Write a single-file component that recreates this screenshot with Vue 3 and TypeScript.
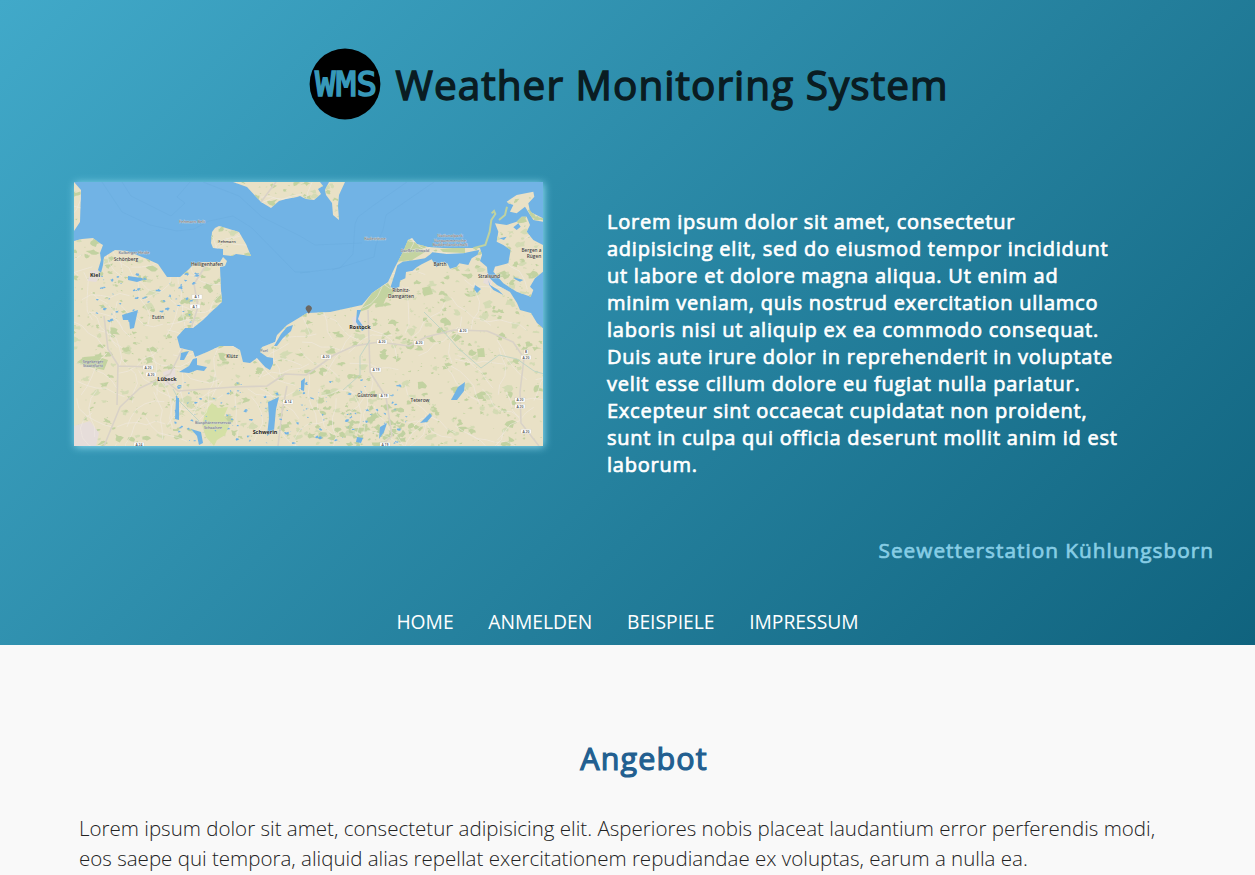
<script setup lang="ts">
interface Patch { d: string; fill: string }
interface Label { x: number; y: number; t: string; s?: number; k?: string }

let seed = 48271
const rnd = (): number => {
  seed = (seed * 16807) % 2147483647
  return seed / 2147483647
}

const blob = (x: number, y: number, r: number): string => {
  const pts: string[] = []
  for (let i = 0; i < 9; i++) {
    const a = (i / 9) * Math.PI * 2
    const q = r * (0.3 + rnd() * 1.1)
    pts.push(`${(x + Math.cos(a) * q * 1.2).toFixed(1)},${(y + Math.sin(a) * q * 0.8).toFixed(1)}`)
  }
  return `M${pts.join('L')}Z`
}

const patches: Patch[] = []
for (let i = 0; i < 1700; i++) {
  const r = 0.7 + Math.pow(rnd(), 3) * 4.2
  patches.push({ d: blob(rnd() * 470, rnd() * 264, r), fill: rnd() > 0.4 ? '#c2d2a1' : '#d4dbb4' })
}
for (let i = 0; i < 60; i++) {
  const r = 1.2 + rnd() * 3
  patches.push({ d: blob(225 + rnd() * 105, 225 + rnd() * 38, r), fill: '#c0d1a1' })
}
const lakes: Patch[] = []
for (let i = 0; i < 60; i++) {
  lakes.push({ d: blob(20 + rnd() * 105, 92 + rnd() * 48, 0.5 + rnd() * 1.5), fill: '#71b3e5' })
}
for (let i = 0; i < 110; i++) {
  lakes.push({ d: blob(100 + rnd() * 235, 198 + rnd() * 64, 0.4 + rnd() * 1.5), fill: '#71b3e5' })
}
const lanes: string[] = []
for (let i = 0; i < 190; i++) {
  let x = rnd() * 470
  let y = rnd() * 264
  let d = `M${x.toFixed(1)} ${y.toFixed(1)}`
  let a = rnd() * 6.28
  for (let j = 0; j < 5; j++) {
    a += (rnd() - 0.5) * 1.3
    x += Math.cos(a) * 10
    y += Math.sin(a) * 10
    d += `L${x.toFixed(1)} ${y.toFixed(1)}`
  }
  lanes.push(d)
}

const labels: Label[] = [
  { x: 21, y: 95, t: 'Kiel', s: 5.4, k: 'city' },
  { x: 52, y: 79, t: 'Schönberg' },
  { x: 60, y: 72, t: 'Kolberger Heide', s: 4, k: 'soft' },
  { x: 118, y: 41, t: 'Fehmarn Belt', s: 4, k: 'soft' },
  { x: 153, y: 61, t: 'Fehmarn', s: 4 },
  { x: 133, y: 84, t: 'Heiligenhafen' },
  { x: 84, y: 137, t: 'Eutin' },
  { x: 93, y: 199, t: 'Lübeck', s: 5.4, k: 'city' },
  { x: 158, y: 176, t: 'Klütz' },
  { x: 190, y: 170, t: 'Poel', s: 3.6, k: 'soft' },
  { x: 191, y: 252, t: 'Schwerin', s: 5.4, k: 'city' },
  { x: 19, y: 181, t: 'Segeberger', s: 3.8, k: 'soft' },
  { x: 19, y: 185, t: 'Staatsforst', s: 3.8, k: 'soft' },
  { x: 139, y: 242, t: 'Biosphärenreservat', s: 3.8, k: 'soft' },
  { x: 139, y: 246.5, t: 'Schaalsee', s: 3.8, k: 'soft' },
  { x: 301, y: 58, t: 'Kadetrinne', s: 4, k: 'soft' },
  { x: 376, y: 55, t: 'Nationalpark', s: 4, k: 'soft' },
  { x: 376, y: 59.5, t: 'Vorpommersche', s: 4, k: 'soft' },
  { x: 376, y: 64, t: 'Boddenlandschaft', s: 4, k: 'soft' },
  { x: 341, y: 69.5, t: 'Darßer Urwald', s: 4, k: 'soft' },
  { x: 366, y: 84, t: 'Barth' },
  { x: 415, y: 96, t: 'Stralsund' },
  { x: 457.5, y: 70, t: 'Bergen a', s: 4.7 },
  { x: 460, y: 75.5, t: 'Rügen' },
  { x: 327, y: 110, t: 'Ribnitz-' },
  { x: 327, y: 115.5, t: 'Damgarten' },
  { x: 286, y: 147, t: 'Rostock', s: 5.4, k: 'city' },
  { x: 293, y: 215, t: 'Güstrow' },
  { x: 346, y: 220, t: 'Teterow' }
]
const shields: Label[] = [
  { x: 123, y: 115, t: 'A 1' }, { x: 121, y: 124.5, t: 'A 1' },
  { x: 74, y: 185.5, t: 'A 20' }, { x: 77, y: 192.5, t: 'A 20' },
  { x: 214, y: 220, t: 'A 14' }, { x: 252, y: 175, t: 'A 20' },
  { x: 308, y: 160, t: 'A 20' }, { x: 345, y: 161, t: 'A 20' },
  { x: 389, y: 149, t: 'A 20' }, { x: 302, y: 188, t: 'A 19' },
  { x: 310, y: 214, t: 'A 19' }, { x: 452, y: 170, t: '8' },
  { x: 452, y: 175.5, t: 'A 20' }, { x: 446, y: 218, t: 'A 20' },
  { x: 446, y: 224.5, t: 'A 20' }, { x: 452, y: 249.5, t: 'A 20' },
  { x: 65, y: 262.6, t: 'A 24' }, { x: 311, y: 262.6, t: 'A 19' }
]
const menu: string[] = ['HOME', 'ANMELDEN', 'BEISPIELE', 'IMPRESSUM']
</script>

<template>
  <header class="hero">
    <div class="brand">
      <svg class="logo" viewBox="0 0 72 72" role="img" aria-label="WMS">
        <circle cx="36" cy="36" r="35.4" fill="#000" />
        <text x="37" y="48" text-anchor="middle" textLength="62">WMS</text>
      </svg>
      <h1>Weather Monitoring System</h1>
    </div>

    <div class="intro">
      <svg class="map" viewBox="0 0 469 264">
        <defs>
          <clipPath id="land">
            <path d="M0 59L8 57L19 56L24 60L29 63L26 71L27 78L24 88L27 91L29 83L30 75L41 68L53 69L73 77L84 82L93 95L106 95L114 88L119 83L129 80L146 80L149 75L153 79L151 84L146 85L147 108L148 120L136 131L129 138L119 146L111 146L103 155L106 166L119 169L121 175L133 170L146 164L159 164L166 168L169 180L176 181L183 176L191 185L196 188L199 182L199 176L193 175L186 170L188 165L201 160L203 153L213 143L233 131L256 130L279 125L288 123L298 111L314 100L321 85L329 70L334 58L338 56L343 62L354 65L369 66L391 66L406 66L408 73L406 79L413 85L414 95L423 103L436 110L443 121L446 128L457 131L463 141L470 147V264H0Z" />
            <path d="M0 0L7 8L6 40L0 49ZM159 0L173 5L187 20L197 26L205 19L212 17L223 15L226 14L232 17L240 18L247 12L244 7L249 4L246 0ZM255 0L251 8L252 13L258 21L259 33L265 38L264 24L265 13L271 0ZM141 46L145 44L152 46L165 50L172 62L177 74L162 72L158 74L149 73L149 67L139 66L137 61L138 50Z" />
            <path transform="translate(226 -12) scale(.33333)" d="M620 165L650 155L665 140L680 140L690 165L680 185L700 210L729 225V305L705 325L690 350L700 360L692 380L650 365L610 340L580 305L585 290L625 280L632 240L610 225L590 215L595 185L585 160ZM620 95L650 75L700 65L703 80L685 100L690 125L729 145V155L700 150L675 110L650 130L630 125L640 105L625 100Z" />
          </clipPath>
        </defs>
        <rect width="470" height="264" fill="#71b3e5" />
        <path class="sea-line" d="M28 0L48 30L76 43L103 49L120 47L135 39L159 34L178 46L221 90H236M48 0L57 14L97 34L111 21L103 15L116 0M333 0L300 23L284 35L281 42L279 72L266 86L226 91M360 0L312 33L309 48L302 63L300 75L258 88M129 0L165 14L188 35L226 54L241 63L288 61" />
        <g clip-path="url(#land)">
          <rect width="470" height="264" fill="#e9e1c6" />
          <path v-for="(p, i) in patches" :key="'p' + i" :d="p.d" :fill="p.fill" />
          <path fill="#c3d3a0" d="M321 80L334 56L343 62L351 70L338 78ZM366 67L391 65L391 71L369 70ZM285 130L298 111L314 101L320 111L312 116L309 123L300 121L294 127ZM2 181L10 175L22 174L34 178L30 188L15 185ZM348 106L356 104L359 112L350 114ZM403 167L410 166L411 175L404 175Z" />
          <path fill="#d4e0a5" d="M132 228L138 221L144 226L154 225L150 234L156 242L151 253L143 258L140 264L132 255L128 243Z" />
          <path fill="#e6ddda" d="M16 89L23 88L27 94L22 100L14 99ZM89 190L101 186L102 201L91 204ZM0 244L16 239L25 251L22 264H0ZM412 91L420 91L417 104L409 101ZM278 136L285 132L290 146L280 147Z" />
          <g class="lanes"><path v-for="(d, i) in lanes" :key="'l' + i" :d="d" /></g>
          <path class="street" d="M134 80L120 102L124 125L116 150L108 168L96 192L66 206L46 225L30 264M30 134L34 167L44 183L43 223M44 184L80 185M92 199L104 209L160 205L193 204L211 192L232 193L260 173L280 164L305 160L335 164L352 155L380 148L413 149L439 160L450 176L446 210L447 241L465 264M294 128L296 190L312 215L318 254L306 264M213 204L208 230L204 264M202 0L187 20" />
          <path class="stream" d="M350 130L369 149L384 166L407 186L425 173L443 177L460 189L470 192M296 158L286 174L286 193L269 208M99 207L106 220L125 239" />
        </g>
        <g transform="translate(226 -12) scale(.33333)">
          <path d="M575 130L582 123L586 132L574 150L569 185L556 225L520 235M621 110L615 135L597 150M686 119L700 142L729 148" fill="none" stroke="#bfd2a0" stroke-width="6" />
          <path class="water" d="M272 350L285 310L292 286L308 275L345 270L375 265L392 252L397 247L440 252L490 250L525 242L538 240L532 255L515 265L505 285L478 280L470 290L450 296L442 280L425 275L410 292L395 268L365 283L350 292L338 302L318 306L316 325L300 332L298 350L281 358ZM565 330L570 345L595 360L610 375L580 360L568 345ZM635 315L640 322L670 330L660 335L645 328ZM655 160L662 170L650 180L640 172ZM598 205L620 200L612 210Z" />
        </g>
        <path v-for="(p, i) in lakes" :key="'w' + i" :d="p.d" :fill="p.fill" />
        <path class="water" d="M54 94L68 96L69 98L63 100L54 98ZM48 133L64 128L60 146L56 147L55 138L49 138ZM107 171L115 169L110 178L106 178ZM105 190L115 184L119 177L123 176L123 183L133 185L130 189L123 188L115 191ZM102 216L105 216L105 238L101 237ZM194 220L205 215L202 227L200 249L193 254L195 236ZM377 218L384 205L391 200L390 209L383 218ZM346 241L356 231L358 234L353 240ZM283 128L287 128L284 137L291 147L288 149L282 140ZM117 247L127 250L129 261L125 263L123 254ZM207 152L213 145L219 143L217 149L209 156L203 164L200 164ZM283 255L289 256L287 261L282 260ZM306 245L313 241L310 250L305 257ZM401 103L407 107L403 111L400 107ZM227 199L231 196L230 209L227 208Z" />
        <g v-for="(s, i) in shields" :key="'s' + i">
          <rect :x="s.x - (s.t.length > 2 ? 5 : 2)" :y="s.y - 2.3" :width="s.t.length > 2 ? 10 : 4" height="4.3" fill="#fff" stroke="#ccc7bb" stroke-width=".3" />
          <text class="shield" :x="s.x" :y="s.y + 1.2">{{ s.t }}</text>
        </g>
        <text v-for="(l, i) in labels" :key="'t' + i" :class="['name', l.k]" :x="l.x" :y="l.y" :font-size="l.s || 4.8">{{ l.t }}</text>
        <path d="M234.8 131.8L232.5 128.5A3 3 0 1 1 237 128.5Z" fill="#6b6762" />
      </svg>
      <p class="lead">Lorem ipsum dolor sit amet, consectetur adipisicing elit, sed do eiusmod tempor incididunt ut labore et dolore magna aliqua. Ut enim ad minim veniam, quis nostrud exercitation ullamco laboris nisi ut aliquip ex ea commodo consequat. Duis aute irure dolor in reprehenderit in voluptate velit esse cillum dolore eu fugiat nulla pariatur. Excepteur sint occaecat cupidatat non proident, sunt in culpa qui officia deserunt mollit anim id est laborum.</p>
    </div>

    <p class="station">Seewetterstation Kühlungsborn</p>
    <nav class="menu">
      <a v-for="m in menu" :key="m">{{ m }}</a>
    </nav>
  </header>

  <main class="offer">
    <h2>Angebot</h2>
    <p>Lorem ipsum dolor sit amet, consectetur adipisicing elit. Asperiores nobis placeat laudantium error perferendis modi, eos saepe qui tempora, aliquid alias repellat exercitationem repudiandae ex voluptas, earum a nulla ea.</p>
  </main>
</template>

<style>
body {
  margin: 0;
  background: #f9f9f9;
  overflow: hidden;
}
</style>

<style scoped>
.hero {
  height: 645px;
  box-sizing: border-box;
  padding-top: 47px;
  font-family: "Open Sans", sans-serif;
  background: linear-gradient(135deg, #41a9c9, #10637e);
}
.brand {
  display: flex;
  justify-content: center;
  height: 73px;
  padding-left: 2px;
}
.logo {
  width: 72px;
  height: 72px;
  margin: .5px 15px 0 0;
}
.logo text {
  font: 34px "DejaVu Sans Mono", monospace;
  fill: #3798b9;
  stroke: #3798b9;
  stroke-width: 1.6px;
}
h1 {
  margin: 11px 0 0;
  font-size: 40.5px;
  line-height: 54px;
  font-weight: 400;
  letter-spacing: 1.04px;
  color: #0a1c22;
  -webkit-text-stroke: 1.4px #0a1c22;
}
.intro {
  display: flex;
  align-items: flex-start;
  padding: 62px 0 0 74px;
}
.map {
  width: 469px;
  height: 264px;
  flex: none;
  box-shadow: 1px 1px 8px #8fdcf0;
}
.water { fill: #71b3e5; }
.sea-line { fill: none; stroke: #68a9db; stroke-width: .4; }
.lanes { fill: none; stroke: #f0eae0; stroke-width: .6; }
.street { fill: none; stroke: #d9d2c7; stroke-width: 1.6; stroke-linejoin: round; }
.stream { fill: none; stroke: #bcd2c4; stroke-width: .9; }
.name {
  text-anchor: middle;
  fill: #3b3b3b;
  stroke: #f4efdf;
  stroke-width: .5px;
  paint-order: stroke;
  font-family: "Open Sans", sans-serif;
  font-weight: 600;
}
.city { font-weight: 700; fill: #222; }
.soft { fill: #7c7f86; stroke: #d9dee0; stroke-width: .5px; }
.shield {
  text-anchor: middle;
  font: 600 3.4px "Open Sans", sans-serif;
  fill: #444;
}
.lead {
  width: 520px;
  margin: 26px 0 0 64px;
  font-size: 20px;
  line-height: 27px;
  letter-spacing: .76px;
  color: #fff;
  -webkit-text-stroke: .7px #fff;
}
.station {
  margin: 59px 41px 0 0;
  text-align: right;
  font-size: 20.8px;
  line-height: 27px;
  letter-spacing: 1px;
  color: #87cde5;
  -webkit-text-stroke: .7px #87cde5;
}
.menu {
  display: flex;
  justify-content: center;
  gap: 34.6px;
  margin-top: 45px;
  font-size: 19.3px;
  line-height: 26px;
  color: #fff;
}
.offer {
  padding: 91px 79px 0;
  font-family: "Open Sans", sans-serif;
}
h2 {
  margin: 0 0 0 33px;
  text-align: center;
  font-size: 30.5px;
  line-height: 44px;
  font-weight: 400;
  letter-spacing: 1.1px;
  color: #225f90;
  -webkit-text-stroke: 1.2px #225f90;
}
.offer p {
  margin: 33px 0 0;
  font-size: 20.52px;
  line-height: 30px;
  font-weight: 300;
  color: #222;
}
</style>
